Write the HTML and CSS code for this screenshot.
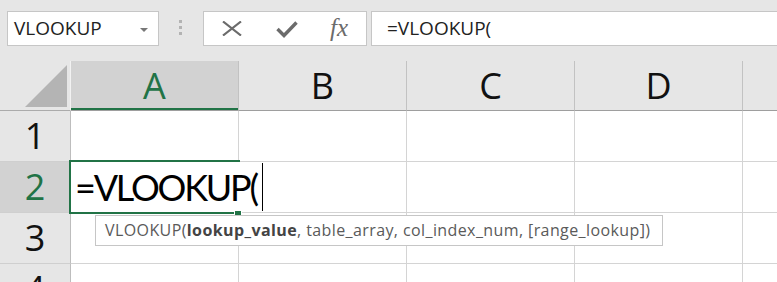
FILE: index.html
```html
<!DOCTYPE html>
<html>
<head>
<meta charset="utf-8">
<link rel="stylesheet" href="styles.css">
</head>
<body>
<div class="page">
  <div class="topbar">
    <div class="namebox"><span class="nb-text">VLOOKUP</span><span class="nb-arrow"></span></div>
    <div class="grip"><i></i><i></i><i></i></div>
    <div class="fxbtns">
      <span class="btn btn-x"><svg width="20" height="15" viewBox="0 0 20 15"><path d="M1 0.5 L19 14.5 M19 0.5 L1 14.5" stroke="#6b6b6b" stroke-width="2.2" fill="none"/></svg></span>
      <span class="btn btn-ok"><svg width="22" height="17" viewBox="0 0 22 17"><path d="M1.5 8 L8 14.5 L20.5 1.5" stroke="#6b6b6b" stroke-width="3.4" fill="none"/></svg></span>
      <span class="btn btn-fx">fx</span>
    </div>
    <div class="formula">=VLOOKUP(</div>
  </div>
  <div class="sheet">
    <div class="grid">
      <div class="corner"><span class="tri"></span></div>
      <div class="ch sel">A</div>
      <div class="ch">B</div>
      <div class="ch">C</div>
      <div class="ch">D</div>
      <div class="ch"></div>

      <div class="rh">1</div>
      <div class="cell"></div><div class="cell"></div><div class="cell"></div><div class="cell"></div><div class="cell"></div>

      <div class="rh sel">2</div>
      <div class="cell edit"><span class="edit-text">=VLOOKUP(</span><span class="caret"></span></div><div class="cell"></div><div class="cell"></div><div class="cell"></div><div class="cell"></div>

      <div class="rh">3</div>
      <div class="cell"></div><div class="cell"></div><div class="cell"></div><div class="cell"></div><div class="cell"></div>

      <div class="rh">4</div>
      <div class="cell"></div><div class="cell"></div><div class="cell"></div><div class="cell"></div><div class="cell"></div>
    </div>
    <div class="active"></div>
    <div class="handle"></div>
    <div class="tooltip">VLOOKUP(<b>lookup_value</b>, table_array, col_index_num, [range_lookup])</div>
  </div>
</div>
</body>
</html>
```
FILE: styles.css
```css
html, body {
  margin: 0;
  padding: 0;
  background: #ffffff;
}
.page {
  width: 777px;
  height: 282px;
  overflow: hidden;
  position: relative;
  font-family: "Open Sans", "Noto Sans", sans-serif;
}
.topbar {
  box-sizing: border-box;
  height: 61px;
  background: #e6e6e6;
  padding-top: 11px;
  display: flex;
  align-items: flex-start;
}
.namebox {
  box-sizing: border-box;
  margin-left: 7px;
  width: 152px;
  height: 35px;
  background: #fff;
  border: 1px solid #c6c6c6;
  display: flex;
  align-items: center;
  padding-left: 6px;
  padding-right: 10px;
}
.nb-text {
  flex: 1;
  font-size: 19px;
  color: #222;
  line-height: 33px;
}
.nb-arrow {
  width: 0;
  height: 0;
  border-left: 4px solid transparent;
  border-right: 4px solid transparent;
  border-top: 4px solid #777;
  margin-top: 2px;
}
.grip {
  margin-left: 20px;
  padding-top: 9px;
  display: flex;
  flex-direction: column;
  gap: 3px;
}
.grip i {
  display: block;
  width: 3px;
  height: 3px;
  background: #b3b3b3;
}
.fxbtns {
  box-sizing: border-box;
  margin-left: 21px;
  width: 164px;
  height: 35px;
  background: #fff;
  border: 1px solid #c6c6c6;
  display: flex;
  align-items: center;
}
.btn {
  display: flex;
  justify-content: center;
  align-items: center;
  height: 33px;
}
.btn-x { width: 55px; }
.btn-ok { width: 55px; padding-top: 1px; }
.btn-fx {
  width: 50px;
  font-family: "Liberation Serif", "DejaVu Serif", serif;
  font-style: italic;
  font-size: 25px;
  color: #6b6b6b;
  padding-bottom: 2px;
  box-sizing: border-box;
}
.formula {
  box-sizing: border-box;
  margin-left: 4px;
  flex: 1;
  margin-right: -4px;
  height: 35px;
  background: #fff;
  border: 1px solid #c6c6c6;
  padding-left: 15px;
  font-size: 19px;
  line-height: 33px;
  color: #222;
}
.sheet {
  position: relative;
}
.grid {
  display: grid;
  grid-template-columns: 71px 168px 168px 168px 168px 168px;
  grid-template-rows: 50px 51px 51px 51px 51px;
}
.corner {
  box-sizing: border-box;
  background: #e6e6e6;
  border-right: 1px solid #f2f2f2;
  border-bottom: 1px solid #ababab;
  position: relative;
}
.tri {
  position: absolute;
  left: 25px;
  top: 4px;
  width: 0;
  height: 0;
  border-left: 42px solid transparent;
  border-bottom: 42px solid #b4b4b4;
}
.ch {
  box-sizing: border-box;
  background: #e6e6e6;
  border-right: 1px solid #c2c2c2;
  border-bottom: 1px solid #9e9e9e;
  font-size: 36px;
  line-height: 49px;
  text-align: center;
  color: #111;
}
.ch.sel {
  background: #d2d2d2;
  color: #217346;
  box-shadow: inset 0 -2px 0 #217346;
}
.rh {
  box-sizing: border-box;
  background: #e6e6e6;
  border-right: 1px solid #bdbdbd;
  border-bottom: 1px solid #cfcfcf;
  font-size: 36px;
  line-height: 50px;
  text-align: center;
  color: #111;
}
.rh.sel {
  background: #d2d2d2;
  color: #217346;
}
.cell {
  box-sizing: border-box;
  border-right: 1px solid #d4d4d4;
  border-bottom: 1px solid #d4d4d4;
}
.cell.edit {
  position: relative;
  z-index: 3;
  display: flex;
  align-items: center;
  font-family: "Lato", "Open Sans", sans-serif;
  font-size: 36px;
  line-height: 50px;
  padding-left: 4px;
  color: #000;
  white-space: nowrap;
  overflow: visible;
  border-right-color: transparent;
  border-bottom-color: transparent;
}
.edit-text {
  letter-spacing: -2.2px;
  background: #fff;
}
.caret {
  display: block;
  flex: none;
  width: 1px;
  height: 48px;
  margin-left: 5px;
  margin-top: -1px;
  background: #000;
}
.active {
  position: absolute;
  left: 69px;
  top: 99px;
  width: 171px;
  height: 54px;
  box-sizing: border-box;
  border: 2px solid #217346;
  border-right: 0;
  z-index: 2;
}
.handle {
  position: absolute;
  left: 234px;
  top: 149px;
  width: 6px;
  height: 6px;
  background: #217346;
  border: 1px solid #fff;
  z-index: 4;
}
.tooltip {
  position: absolute;
  left: 95px;
  top: 154px;
  width: 568px;
  height: 31px;
  box-sizing: border-box;
  background: #fff;
  border: 1px solid #c6c6c6;
  padding-left: 9px;
  font-size: 16px;
  letter-spacing: 0.4px;
  line-height: 29px;
  color: #5a5a5a;
  white-space: nowrap;
  z-index: 5;
}
.tooltip b {
  font-weight: 700;
  color: #444;
}
```
